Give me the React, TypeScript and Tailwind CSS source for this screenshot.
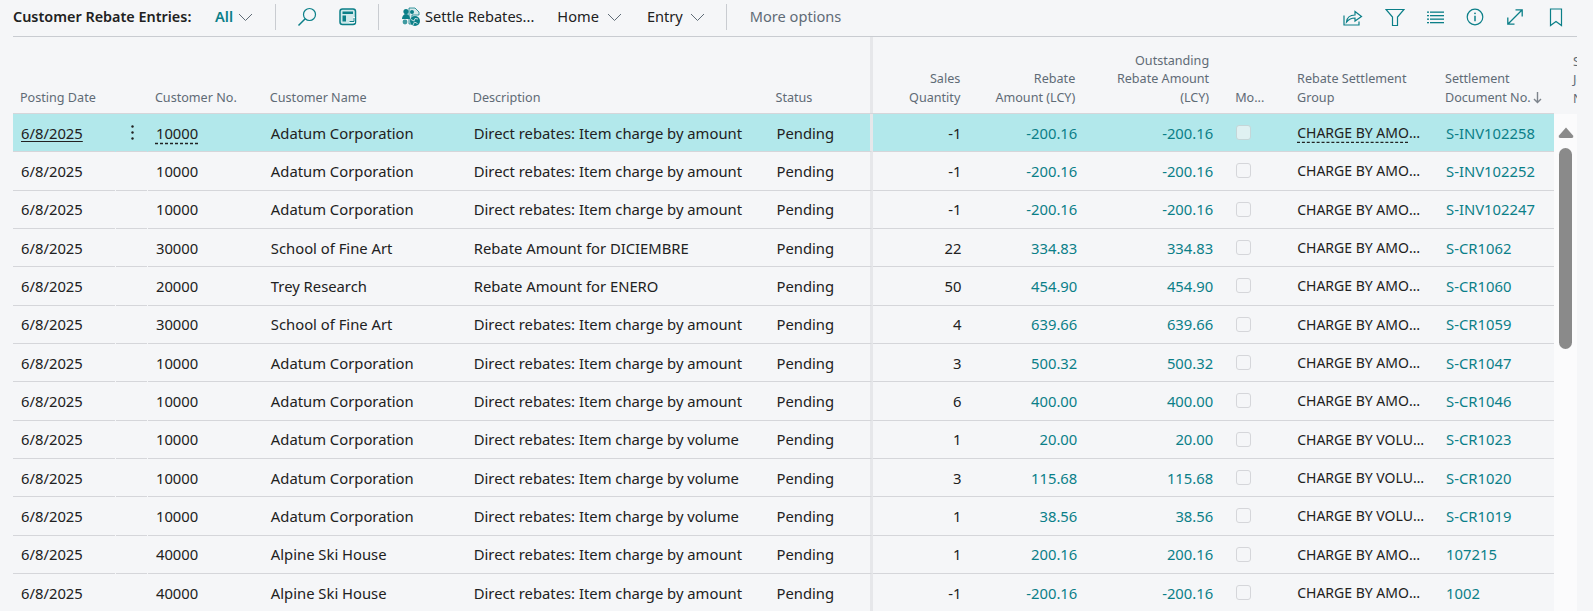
import React from "react";

type Row = {
  cust: string;
  name: string;
  desc: string;
  qty: string;
  amt: string;
  group: string;
  doc: string;
};

const AMT = "Direct rebates: Item charge by amount";
const VOL = "Direct rebates: Item charge by volume";
const CA = "CHARGE BY AMOUNT";
const CV = "CHARGE BY VOLUME";
const AD = "Adatum Corporation";

const rows: Row[] = [
  { cust: "10000", name: AD, desc: AMT, qty: "-1", amt: "-200.16", group: CA, doc: "S-INV102258" },
  { cust: "10000", name: AD, desc: AMT, qty: "-1", amt: "-200.16", group: CA, doc: "S-INV102252" },
  { cust: "10000", name: AD, desc: AMT, qty: "-1", amt: "-200.16", group: CA, doc: "S-INV102247" },
  { cust: "30000", name: "School of Fine Art", desc: "Rebate Amount for DICIEMBRE", qty: "22", amt: "334.83", group: CA, doc: "S-CR1062" },
  { cust: "20000", name: "Trey Research", desc: "Rebate Amount for ENERO", qty: "50", amt: "454.90", group: CA, doc: "S-CR1060" },
  { cust: "30000", name: "School of Fine Art", desc: AMT, qty: "4", amt: "639.66", group: CA, doc: "S-CR1059" },
  { cust: "10000", name: AD, desc: AMT, qty: "3", amt: "500.32", group: CA, doc: "S-CR1047" },
  { cust: "10000", name: AD, desc: AMT, qty: "6", amt: "400.00", group: CA, doc: "S-CR1046" },
  { cust: "10000", name: AD, desc: VOL, qty: "1", amt: "20.00", group: CV, doc: "S-CR1023" },
  { cust: "10000", name: AD, desc: VOL, qty: "3", amt: "115.68", group: CV, doc: "S-CR1020" },
  { cust: "10000", name: AD, desc: VOL, qty: "1", amt: "38.56", group: CV, doc: "S-CR1019" },
  { cust: "40000", name: "Alpine Ski House", desc: AMT, qty: "1", amt: "200.16", group: CA, doc: "107215" },
  { cust: "40000", name: "Alpine Ski House", desc: AMT, qty: "-1", amt: "-200.16", group: CA, doc: "1002" },
];

const TEAL = "#0b7f88";

const Chevron = () => (
  <svg width="15" height="9" viewBox="0 0 15 9" fill="none" stroke="#5f6b76" strokeWidth="1">
    <path d="M1 1l6.5 6.5L14 1" />
  </svg>
);

const Divider = () => <div className="h-[26px] w-px bg-[#c9ccd1]" />;

const SearchIcon = () => (
  <svg width="20" height="20" viewBox="0 0 20 20" fill="none" stroke={TEAL} strokeWidth="1.2">
    <circle cx="12.5" cy="7.5" r="6" />
    <path d="M8.2 11.8L1.5 18.5" strokeWidth="1.5" />
  </svg>
);

const LayoutIcon = () => (
  <svg width="18" height="18" viewBox="0 0 18 18">
    <rect x="1" y="1" width="15.5" height="15.5" rx="2.5" fill="#cfe8ea" stroke={TEAL} strokeWidth="1.5" />
    <rect x="3.5" y="3.5" width="10.5" height="2.5" fill={TEAL} />
    <rect x="3.5" y="7.5" width="3.5" height="6" fill={TEAL} />
    <path d="M15 9v5h-5" fill="none" stroke="#f5f6f8" strokeWidth="2" />
    <path d="M15 10v3.5h-4.5" fill="none" stroke={TEAL} strokeWidth="1" />
  </svg>
);

const SettleIcon = () => (
  <svg width="20" height="20" viewBox="0 0 20 20">
    <path d="M8 1h6l4 4v3h-7v9H8z" fill="#d6e9ea" stroke={TEAL} strokeWidth="0.8" />
    <circle cx="5" cy="4.5" r="2.6" fill={TEAL} />
    <path d="M1 12c0-3 1.8-5 4-5s4 2 4 5z" fill={TEAL} />
    <circle cx="11" cy="5" r="2" fill={TEAL} />
    <circle cx="4" cy="15" r="2.4" fill="#3f9aa1" />
    <circle cx="14" cy="14" r="5" fill={TEAL} />
    <path d="M10 12.5l3 1.5 1-2.5 3 .5M12 18l1.5-3 3 1.5" fill="none" stroke="#d6e9ea" strokeWidth="0.9" />
  </svg>
);

const ShareIcon = () => (
  <svg width="20" height="20" viewBox="0 0 20 20" fill="none" stroke={TEAL} strokeWidth="1.2">
    <path d="M1 8.5v9.5h15v-3.5" />
    <path d="M3.5 15c.5-4.5 3.500-7 8.500-7V4.500L18.500 9.500 12 14v-3c-3.500 0-6 1-8.500 4z" fill="#f5f6f8" />
  </svg>
);

const FilterIcon = () => (
  <svg className="ml-[3px]" width="20" height="19" viewBox="0 0 20 19" fill="none" stroke={TEAL} strokeWidth="1.2">
    <path d="M1 1.500h18l-6.500 7.500v8.500h-5V9z" />
  </svg>
);

const ListIcon = () => (
  <svg className="ml-[3px]" width="17" height="13" viewBox="0 0 17 13" fill={TEAL}>
    <rect x="0" y="0.500" width="2" height="1.300" />
    <rect x="3" y="0.500" width="14" height="1.300" />
    <rect x="0" y="4" width="2" height="1.300" />
    <rect x="3" y="4" width="14" height="1.300" />
    <rect x="0" y="7.500" width="2" height="1.300" />
    <rect x="3" y="7.500" width="14" height="1.300" />
    <rect x="0" y="11" width="2" height="1.300" />
    <rect x="3" y="11" width="14" height="1.300" />
  </svg>
);

const InfoIcon = () => (
  <svg width="18" height="18" viewBox="0 0 18 18" fill="none" stroke={TEAL} strokeWidth="1.2">
    <circle cx="9" cy="9" r="7.800" />
    <path d="M9 7.800v5.500" strokeWidth="1.500" />
    <circle cx="9" cy="5.300" r="0.900" fill={TEAL} stroke="none" />
  </svg>
);

const ExpandIcon = () => (
  <svg width="18" height="18" viewBox="0 0 18 18" fill="none" stroke={TEAL} strokeWidth="1.3">
    <path d="M2 16L16 2M9.500 1.800h6.700v6.700M1.800 9.500v6.700h6.700" />
  </svg>
);

const BookmarkIcon = () => (
  <svg width="14" height="19" viewBox="0 0 14 19" fill="none" stroke={TEAL} strokeWidth="1.2">
    <path d="M1.500 1h11v16.500L7 13.500l-5.500 4z" />
  </svg>
);

const SortArrow = () => (
  <svg className="ml-[2px] inline-block" width="9" height="12" viewBox="0 0 9 12" fill="none" stroke="#7d848c" strokeWidth="1.4">
    <path d="M4.500 0v10.500M1 7l3.500 3.500L8 7" />
  </svg>
);

const rightIcons = [ShareIcon, FilterIcon, ListIcon, InfoIcon, ExpandIcon, BookmarkIcon];

const Toolbar = () => (
  <div className="flex h-[37px] w-[1564px] items-center border-b border-[#c9ccd1] pb-[2px] text-[14.6px] text-[#212121]">
    <span className="w-[202px] whitespace-nowrap text-[14.4px] font-semibold">Customer Rebate Entries:</span>
    <span className="font-semibold" style={{ color: TEAL }}>All</span>
    <span className="ml-[5px] mr-[22px]"><Chevron /></span>
    <Divider />
    <span className="ml-[21px]"><SearchIcon /></span>
    <span className="ml-[22px] mr-[21px]"><LayoutIcon /></span>
    <Divider />
    <span className="ml-[22px]"><SettleIcon /></span>
    <span className="ml-[4px]">Settle Rebates...</span>
    <span className="ml-[23px]">Home</span>
    <span className="ml-[8px]"><Chevron /></span>
    <span className="ml-[25px]">Entry</span>
    <span className="ml-[7px] mr-[21px]"><Chevron /></span>
    <Divider />
    <span className="ml-[23px] text-[#5f6b76]">More options</span>
    <div className="ml-auto mr-px flex items-center">
      {rightIcons.map((Icon, i) => (
        <div key={i} className="flex w-[40.6px] justify-center">
          <Icon />
        </div>
      ))}
    </div>
  </div>
);

const Header = () => (
  <div className="flex h-[77px] w-[1564px] items-stretch overflow-hidden text-[12.6px] leading-[18.3px] text-[#5f6b76]">
    <div className="flex h-[77px] w-[1541px] shrink-0 items-end border-b border-[#d5d6da] pb-[6px]">
      <div className="w-[135px] pl-[7px]">Posting Date</div>
      <div className="w-[115px] pl-[7px]">Customer No.</div>
      <div className="w-[203px] pl-[7px]">Customer Name</div>
      <div className="w-[303px] pl-[7px]">Description</div>
      <div className="-mb-[6px] flex h-[77px] w-[105px] items-end border-r-[3px] border-[#e6e7ea] pb-[6px] pl-[7px]">Status</div>
      <div className="w-[96px] pr-[9px] text-right">Sales<br />Quantity</div>
      <div className="w-[117px] pr-[11px] text-right">Rebate<br />Amount (LCY)</div>
      <div className="w-[135px] pr-[12px] text-right">Outstanding<br />Rebate Amount<br />(LCY)</div>
      <div className="w-[69px] pl-[14px]">Mo...</div>
      <div className="w-[148px] pl-[7px]">Rebate Settlement<br />Group</div>
      <div className="w-[116px] shrink-0 whitespace-nowrap pl-[7px]">
        Settlement<br />Document No.<SortArrow />
      </div>
    </div>
    <div className="flex w-[23px] shrink-0 items-end overflow-hidden pb-[6px] pl-[19px]">
      <div className="whitespace-nowrap">Settlement<br />Journal<br />No.</div>
    </div>
  </div>
);

const TableRow = ({ row, selected }: { row: Row; selected: boolean }) => (
  <div className={selected ? "flex h-[38.33px] items-stretch bg-[#b2e8eb]" : "flex h-[38.33px] items-stretch"}>
    <div className="mr-px flex w-[102px] items-center border-b border-[#d5d6da] pl-[8px]">
      <span className={selected ? "underline underline-offset-2" : ""}>6/8/2025</span>
    </div>
    <div className="mr-px flex w-[31px] items-center justify-center border-b border-[#d5d6da] pl-[3px]">
      {selected && (
        <svg width="3" height="15" viewBox="0 0 3 15" fill="#212121">
          <circle cx="1.500" cy="1.500" r="1.200" />
          <circle cx="1.500" cy="7.500" r="1.200" />
          <circle cx="1.500" cy="13.500" r="1.200" />
        </svg>
      )}
    </div>
    <div className="flex w-[115px] items-center border-b border-[#d5d6da] pl-[8px]">
      <span className={selected ? "underline decoration-dashed underline-offset-4" : ""}>{row.cust}</span>
    </div>
    <div className="flex w-[203px] items-center border-b border-[#d5d6da] pl-[8px]">{row.name}</div>
    <div className="flex w-[303px] items-center border-b border-[#d5d6da] pl-[8px]">{row.desc}</div>
    <div className="flex w-[105px] items-center border-b border-r-[3px] border-b-[#d5d6da] border-r-[#e6e7ea] pl-[8px]">Pending</div>
    <div className="flex w-[96px] items-center justify-end border-b border-[#d5d6da] pr-[8px]">{row.qty}</div>
    <div className="flex w-[117px] items-center justify-end border-b border-[#d5d6da] pr-[9px]" style={{ color: TEAL }}>{row.amt}</div>
    <div className="flex w-[135px] items-center justify-end border-b border-[#d5d6da] pr-[8px]" style={{ color: TEAL }}>{row.amt}</div>
    <div className="flex w-[69px] items-center border-b border-[#d5d6da] pl-[15px]">
      <div className={selected ? "h-[15px] w-[15px] rounded-[3px] border border-[#c4d6d8] bg-[#dff1f2]" : "h-[15px] w-[15px] rounded-[3px] border border-[#d5d6da]"} />
    </div>
    <div className="flex w-[148px] items-center border-b border-[#d5d6da] pl-[7px]">
      <span className={selected ? "w-[130px] truncate text-[14px] underline decoration-dashed underline-offset-4" : "w-[130px] truncate text-[14px]"}>{row.group}</span>
    </div>
    <div className="flex w-[116px] items-center border-b border-[#d5d6da] pl-[8px]" style={{ color: TEAL }}>{row.doc}</div>
  </div>
);

const ScrollTrack = () => (
  <div className="flex w-[23px] shrink-0 flex-col items-center bg-[#fbfbfc]">
    <svg className="mt-[13px]" width="16" height="12" viewBox="0 0 16 12" fill="#8a8a8a">
      <path d="M8 .5L15 8.500q1 2.500-1.500 2.500H2.500Q0 11 1 8.500z" />
    </svg>
    <div className="mt-[9px] h-[201px] w-[13px] rounded-full bg-[#8a8a8a]" />
  </div>
);

export default function App() {
  return (
    <div className="h-[611px] w-[1593px] overflow-hidden bg-[#f5f6f8] pl-[13px] font-['Noto_Sans',sans-serif] text-[14.8px] text-[#212121]">
      <Toolbar />
      <Header />
      <div className="flex h-[497px] w-[1564px] overflow-hidden">
        <div className="w-[1541px] shrink-0">
          {rows.map((r, i) => (
            <TableRow key={i} row={r} selected={i === 0} />
          ))}
        </div>
        <ScrollTrack />
      </div>
    </div>
  );
}
